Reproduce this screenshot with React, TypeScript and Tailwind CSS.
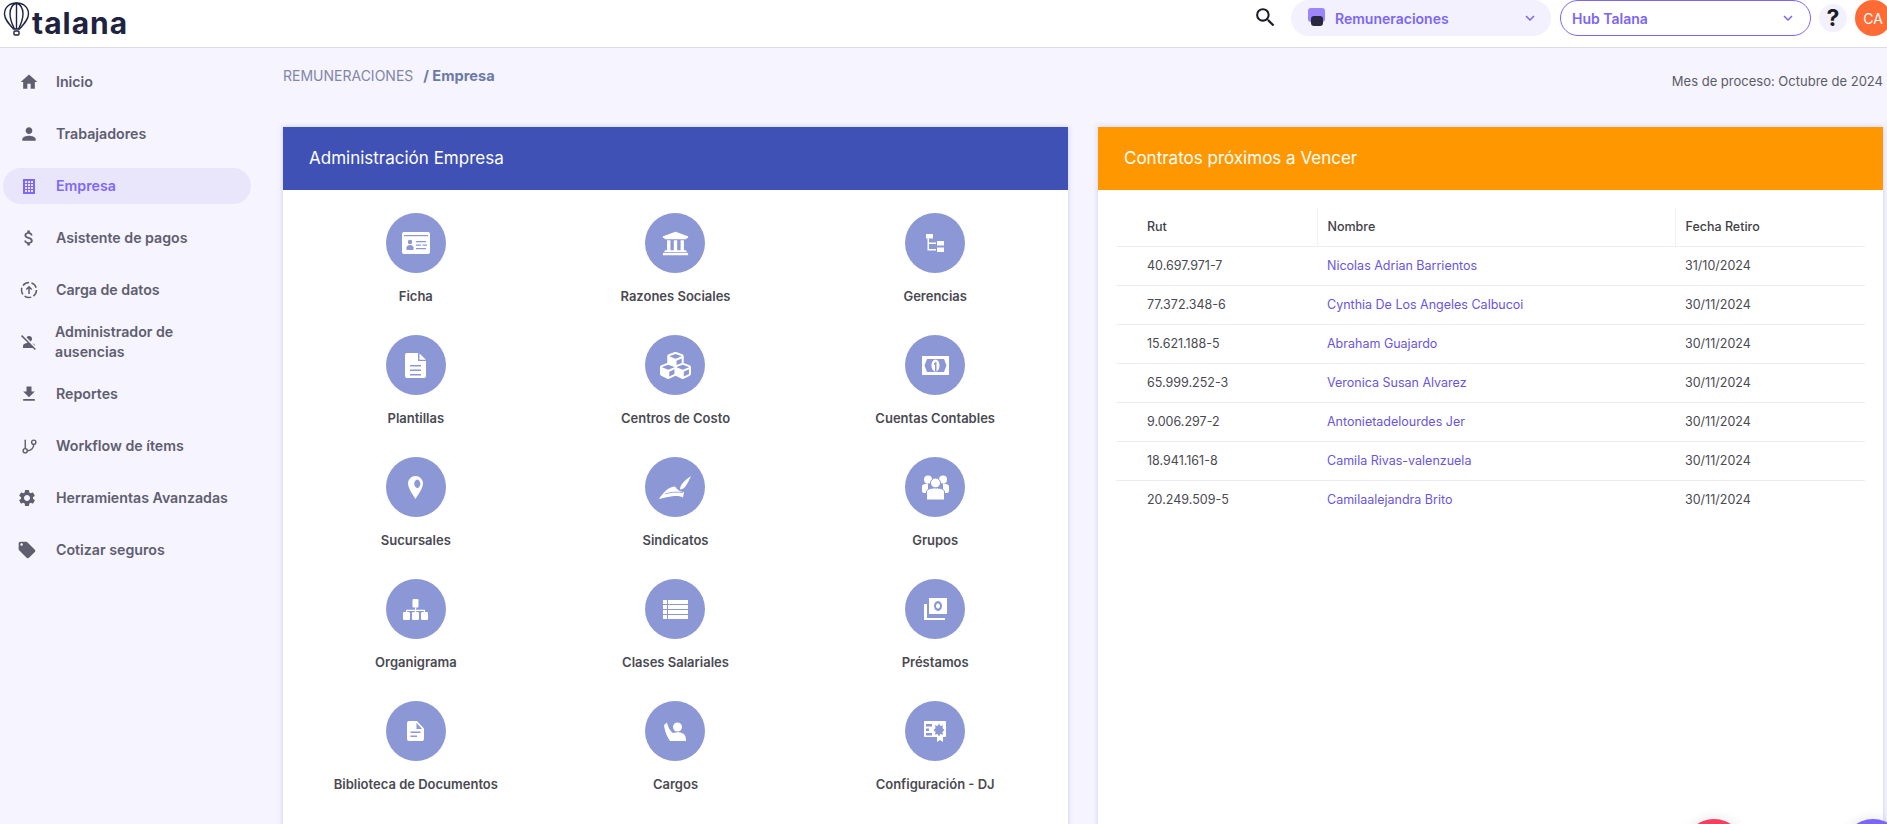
import React from "react";
import { MdHome, MdPerson, MdAttachMoney, MdPersonOff, MdFileDownload, MdSettings, MdLocalOffer, MdKeyboardArrowDown, MdSearch } from "react-icons/md";
import { FiGitBranch } from "react-icons/fi";
import { FaUniversity, FaCubes } from "react-icons/fa";

const C = "#8c97d5";

const BuildingIcon = () => (
  <svg width="18" height="18" viewBox="0 0 18 18"><path fill="currentColor" fillRule="evenodd" d="M3 2h12v15H3zM5 4v2h2V4zm3 0v2h2V4zm3 0v2h2V4zM5 7v2h2V7zm3 0v2h2V7zm3 0v2h2V7zM5 10v2h2v-2zm3 0v2h2v-2zm3 0v2h2v-2zM5 13v2h2v-2zm3 0v2h2v-2zm3 0v2h2v-2z" /></svg>
);
const UploadDashed = () => (
  <svg width="20" height="20" viewBox="0 0 20 20" fill="none" stroke="currentColor" strokeWidth="1.5"><circle cx="10" cy="10" r="7.5" strokeDasharray="7 2.4" /><path d="M10 14V7M7.3 9.5 10 6.8l2.7 2.7" /></svg>
);

const nav = [
  { label: "Inicio", icon: <MdHome size={20} /> },
  { label: "Trabajadores", icon: <MdPerson size={20} /> },
  { label: "Empresa", icon: <BuildingIcon />, active: true },
  { label: "Asistente de pagos", icon: <MdAttachMoney size={20} /> },
  { label: "Carga de datos", icon: <UploadDashed /> },
  { label: "Administrador de ausencias", icon: <MdPersonOff size={18} />, two: true },
  { label: "Reportes", icon: <MdFileDownload size={20} /> },
  { label: "Workflow de ítems", icon: <FiGitBranch size={17} /> },
  { label: "Herramientas Avanzadas", icon: <MdSettings size={20} />, left: true },
  { label: "Cotizar seguros", icon: <MdLocalOffer size={20} />, left: true },
];

const S = ({ w, h, children }: { w: number; h: number; children: React.ReactNode }) => (
  <svg width={w} height={h} viewBox={`0 0 ${w} ${h}`} fill="#fff">{children}</svg>
);

const icons: Record<string, React.ReactNode> = {
  Ficha: (
    <S w={28} h={22}>
      <rect width="28" height="22" rx="2" />
      <rect x="2" y="3" width="24" height="1.2" fill={C} />
      <circle cx="8" cy="10" r="2.2" fill={C} />
      <path d="M4.5 18v-2.5c0-1.5 1.5-2.5 3.5-2.5s3.5 1 3.5 2.5V18z" fill={C} />
      <path d="M14 9h10v1.3H14zM14 12.500h5v1.300h-5zM20.500 12.500H25v1.300h-4.500zM14 16h10v1.300H14z" fill={C} />
    </S>
  ),
  "Razones Sociales": <FaUniversity size={27} color="#fff" />,
  Gerencias: (
    <S w={18} h={18}>
      <rect x="0" y="0" width="7" height="4.500" />
      <rect x="11" y="7" width="7" height="4.500" />
      <rect x="11" y="13.500" width="7" height="4.500" />
      <path d="M1.500 4.500H3V8.500h7V10H3v5h7v1.500H1.500z" />
    </S>
  ),
  Plantillas: (
    <S w={22} h={25}>
      <path d="M2 0h11v8h8v15a2 2 0 0 1-2 2H2a2 2 0 0 1-2-2V2a2 2 0 0 1 2-2zM5 12v1.500h11V12zm0 4.500V18h11v-1.500zM5 21v1.500h11V21z" fillRule="evenodd" />
      <path d="M14.500 0.500 21 6.800h-6.500z" />
    </S>
  ),
  "Centros de Costo": <FaCubes size={31} color="#fff" />,
  "Cuentas Contables": (
    <S w={27} h={19}>
      <path fillRule="evenodd" d="M0 0h27v19H0zM5 3 2.500 9.500 5 16h17l2.500-6.500L22 3z" />
      <path fillRule="evenodd" d="M13.500 3.500a4 6 0 1 1-.01 0zM12 7.500v1.300h1V15h1.500V6h-1z" />
    </S>
  ),
  Sucursales: (
    <S w={15} h={23}>
      <path fillRule="evenodd" d="M7.500 0C3.400 0 0 3.300 0 7.500 0 12 5 19 7.500 23 10 19 15 12 15 7.500 15 3.300 11.600 0 7.500 0zm0 4.500a3 4 0 1 1 0 6.500 3 4 0 0 1 0-6.500z" />
    </S>
  ),
  Sindicatos: (
    <S w={32} h={23}>
      <path d="M0 23c1-2.500 3-4 5-6.500C8 13 12 10.500 16 10.500l2 2.500c2 2 4.500 3 7 3l-1 5.500c-3-1.500-6-1.800-9-1.500-5 .5-10 1.500-15 3z" />
      <path d="M21 13.500C21 9 25 5 32 0c-2 4-3.500 8-6 11-1.200 1.500-3 2.500-5 2.500z" />
      <path d="M6 18c5-1.800 11-2.300 18-1.500" fill="none" stroke={C} strokeWidth="0.8" />
    </S>
  ),
  Grupos: (
    <S w={27} h={25}>
      <circle cx="6" cy="4.500" r="4" />
      <circle cx="21" cy="4.500" r="4" />
      <circle cx="13.500" cy="8" r="5" stroke={C} strokeWidth="1" />
      <path d="M0 11c0-1 2-2.500 6-2.500V18H2c-1 0-2-1-2-2zM27 11c0-1-2-2.500-6-2.500V18h4c1 0 2-1 2-2z" />
      <path d="M4.500 25V17c0-2.500 3-4 9-4s9 1.500 9 4v8z" stroke={C} strokeWidth="1" />
    </S>
  ),
  Organigrama: (
    <S w={25} h={21}>
      <rect x="9.500" y="0" width="6" height="8.500" rx="1" />
      <path d="M12 8.500h1.200V10.800H22V13h-1.200v-1h-7.600v1H12v-1H4.200v1H3v-2.200h9z" />
      <rect x="0" y="13" width="7" height="8" rx="1.200" />
      <rect x="9" y="13" width="7" height="8" rx="1.200" />
      <rect x="18" y="13" width="7" height="8" rx="1.200" />
    </S>
  ),
  "Clases Salariales": (
    <S w={25} h={19}>
      <path d="M0 0h4v4H0zM5 0h20v4H5zM0 5h4v4H0zM5 5h20v4H5zM0 10h4v4H0zM5 10h20v4H5zM0 15h4v4H0zM5 15h20v4H5z" />
    </S>
  ),
  Préstamos: (
    <S w={23} h={22}>
      <path fillRule="evenodd" d="M5 0h18v16H5zM14 3a4 5 0 1 0 .01 0zm0 2.500a2 2.500 0 1 1-.01 0z" />
      <path d="M0 6h3v14h18v2H0z" />
    </S>
  ),
  "Biblioteca de Documentos": (
    <S w={17} h={20}>
      <path fillRule="evenodd" d="M2 0h8l7 7.500V18a2 2 0 0 1-2 2H2a2 2 0 0 1-2-2V2a2 2 0 0 1 2-2zM9.500 1.800V8H15zM3.500 10.500V12h10v-1.500zM3.500 14.500V16H10v-1.500z" />
    </S>
  ),
  Cargos: (
    <S w={22} h={19}>
      <circle cx="13.500" cy="5" r="4.500" />
      <path d="M0 3l3-2.500c.8 4 3 8.500 6 10.500 3-1 7-1 10 .5 2 1 3 3 3 7.500H6C3.500 15.500 .5 9 0 3z" />
    </S>
  ),
  "Configuración - DJ": (
    <S w={22} h={21}>
      <path fillRule="evenodd" d="M1 0h20a1 1 0 0 1 1 1v14a1 1 0 0 1-1 1h-2v5l-3-2-3 2v-5H1a1 1 0 0 1-1-1V1a1 1 0 0 1 1-1zM2 3v2.500h6V3zm0 4.500V10h3V7.500zM2 12v2.500h6V12zM15 2.500l1.400 2.600 2.700-.9-.7 2.900 2.100 1.900-2.100 1.900.7 2.900-2.700-.9-1.400 2.600-1.400-2.600-2.700.9.7-2.900-2.100-1.900 2.100-1.900-.7-2.900 2.700.9z" />
    </S>
  ),
};

const admin = [
  "Ficha", "Razones Sociales", "Gerencias",
  "Plantillas", "Centros de Costo", "Cuentas Contables",
  "Sucursales", "Sindicatos", "Grupos",
  "Organigrama", "Clases Salariales", "Préstamos",
  "Biblioteca de Documentos", "Cargos", "Configuración - DJ",
];

const rows = [
  ["40.697.971-7", "Nicolas Adrian Barrientos", "31/10/2024"],
  ["77.372.348-6", "Cynthia De Los Angeles Calbucoi", "30/11/2024"],
  ["15.621.188-5", "Abraham Guajardo", "30/11/2024"],
  ["65.999.252-3", "Veronica Susan Alvarez", "30/11/2024"],
  ["9.006.297-2", "Antonietadelourdes Jer", "30/11/2024"],
  ["18.941.161-8", "Camila Rivas-valenzuela", "30/11/2024"],
  ["20.249.509-5", "Camilaalejandra Brito", "30/11/2024"],
];

const Balloon = () => (
  <svg width="27" height="34" viewBox="0 0 27 34" fill="none" stroke="#1f2340" strokeWidth="1.400">
    <path d="M13.500 1C6.500 1 1.500 5.500 1.500 12c0 5 4 9.500 9 15h6c5-5.500 9-10 9-15 0-6.500-5-11-12-11z" />
    <path d="M13.500 1C9 2.500 7 7 7 12c0 5 2 10 4.500 15M13.500 1C18 2.500 20 7 20 12c0 5-2 10-4.500 15M13.500 1v26" />
    <rect x="11" y="29" width="5" height="4" rx="1" />
  </svg>
);

export default function App() {
  return (
    <div className="relative h-[824px] w-[1887px] overflow-hidden bg-[#f5f4ff] font-['Inter',sans-serif]">
      <header className="flex h-[48px] items-start border-b border-[#dcdae4] bg-white">
        <div className="flex items-start pl-[3px] pt-[2px]">
          <Balloon />
          <span className="mt-[3px] ml-[2px] text-[30px] leading-[36px] font-bold tracking-[1px] text-[#1f2340]">talana</span>
        </div>
        <div className="ml-auto mr-[-4px] flex items-start">
          <MdSearch size={25} className="mt-[5px] mr-[13px] text-[#1c1c28]" />
          <div className="flex h-[36px] w-[260px] items-center rounded-full bg-[#f3f1fd] pl-[17px] pr-[12px]">
            <span className="relative mr-[10px] h-[18px] w-[17px] -translate-y-[1px]">
              <span className="absolute left-0 top-0 h-[14px] w-[17px] rounded-[3px] bg-[#9d85fb]" />
              <span className="absolute bottom-0 left-[3px] h-[10px] w-[12px] rounded-[3px] bg-[#2a2740]" />
            </span>
            <span className="text-[14px] font-semibold text-[#7c66f5]">Remuneraciones</span>
            <MdKeyboardArrowDown size={18} className="ml-auto text-[#7c66f5]" />
          </div>
          <div className="ml-[9px] flex h-[36px] w-[251px] items-center rounded-full border border-[#7c66f5] bg-white pl-[11px] pr-[13px]">
            <span className="text-[14px] font-semibold text-[#7c66f5]">Hub Talana</span>
            <MdKeyboardArrowDown size={18} className="ml-auto text-[#7c66f5]" />
          </div>
          <div className="ml-[8px] mt-[4px] flex h-[28px] w-[28px] items-center justify-center rounded-full bg-[#f3f1fd] text-[23px] font-bold text-[#1c1c28]">?</div>
          <div className="ml-[8px] flex h-[36px] w-[36px] items-center justify-center rounded-full bg-[#ff6b35] text-[14px] text-white">CA</div>
        </div>
      </header>

      <div className="flex">
        <aside className="flex w-[283px] shrink-0 flex-col gap-[16px] pt-[16px]">
          {nav.map((n) => (
            <div
              key={n.label}
              className={`ml-[3px] flex h-[36px] w-[248px] items-center rounded-full pl-[16px] text-[14.2px] font-semibold ${n.active ? "bg-[#e9e6fb] text-[#8066fb]" : "text-[#5e5e6e]"}`}
            >
              <span className={`flex w-[20px] justify-center ${n.left ? "-translate-x-[2px]" : ""}`}>{n.icon}</span>
              <span className={`pb-[1px] ${n.two ? "ml-[16px] w-[150px] leading-[20px]" : "ml-[17px]"}`}>{n.label}</span>
            </div>
          ))}
        </aside>

        <main className="w-[1600px] shrink-0">
          <div className="flex h-[79px] items-start justify-between">
            <div className="mt-[18px] text-[14px] leading-[20px] text-[#7f87a6]">
              REMUNERACIONES <span className="ml-[6px] text-[14.6px] font-bold text-[#6c7aa5]">/ Empresa</span>
            </div>
            <div className="mt-[23px] text-[13px] leading-[20px] text-[#5c5c66]">Mes de proceso: Octubre de 2024</div>
          </div>

          <div className="flex gap-[30px]">
            <section className="h-[720px] w-[785px] bg-white shadow-[0_0_5px_rgba(110,110,210,0.3)]">
              <div className="flex h-[63px] items-center bg-[#3f51b5] pl-[26px] text-[17px] text-white">Administración Empresa</div>
              <div className="grid grid-cols-3 px-[3px] pt-[23px]">
                {admin.map((a) => (
                  <div key={a} className="flex h-[122px] flex-col items-center">
                    <div className="flex h-[60px] w-[60px] items-center justify-center rounded-full bg-[#8c97d5]">{icons[a]}</div>
                    <div className="mt-[14px] text-[13px] leading-[18px] font-semibold text-[#4a4a52]">{a}</div>
                  </div>
                ))}
              </div>
            </section>

            <section className="h-[720px] w-[785px] bg-white shadow-[0_0_5px_rgba(110,110,210,0.3)]">
              <div className="flex h-[63px] items-center bg-[#ff9800] pl-[26px] text-[17px] text-white">Contratos próximos a Vencer</div>
              <div className="px-[18px] pt-[18px]">
                <table className="w-[749px] table-fixed border-collapse text-[12.5px] text-[#4a4a52]">
                  <colgroup>
                    <col className="w-[201px]" />
                    <col className="w-[358px]" />
                    <col className="w-[190px]" />
                  </colgroup>
                  <thead>
                    <tr className="h-[38px] border-b border-[#ececf2] text-left text-[#3f3f48]">
                      <th className="pl-[31px] pt-[2px] font-medium">Rut</th>
                      <th className="border-l border-[#f3f3f7] pl-[10px] pt-[2px] font-medium">Nombre</th>
                      <th className="border-l border-[#f3f3f7] pl-[10px] pt-[2px] font-medium">Fecha Retiro</th>
                    </tr>
                  </thead>
                  <tbody>
                    {rows.map((r) => (
                      <tr key={r[0]} className="h-[39px] border-b border-[#ececf2] last:border-b-0">
                        <td className="pl-[31px] pt-[2px]">{r[0]}</td>
                        <td className="pl-[10px] pt-[2px] text-[#6a55e0]">{r[1]}</td>
                        <td className="pl-[10px] pt-[2px]">{r[2]}</td>
                      </tr>
                    ))}
                  </tbody>
                </table>
              </div>
            </section>
          </div>
        </main>
      </div>

      <div className="absolute left-[1684px] top-[819px] h-[60px] w-[60px] rounded-full bg-[#f43f5e] shadow-[0_0_12px_rgba(0,0,0,0.12)]" />
      <div className="absolute left-[1843px] top-[819px] h-[60px] w-[60px] rounded-full bg-[#7c66f5] shadow-[0_0_12px_rgba(0,0,0,0.12)]" />
    </div>
  );
}
